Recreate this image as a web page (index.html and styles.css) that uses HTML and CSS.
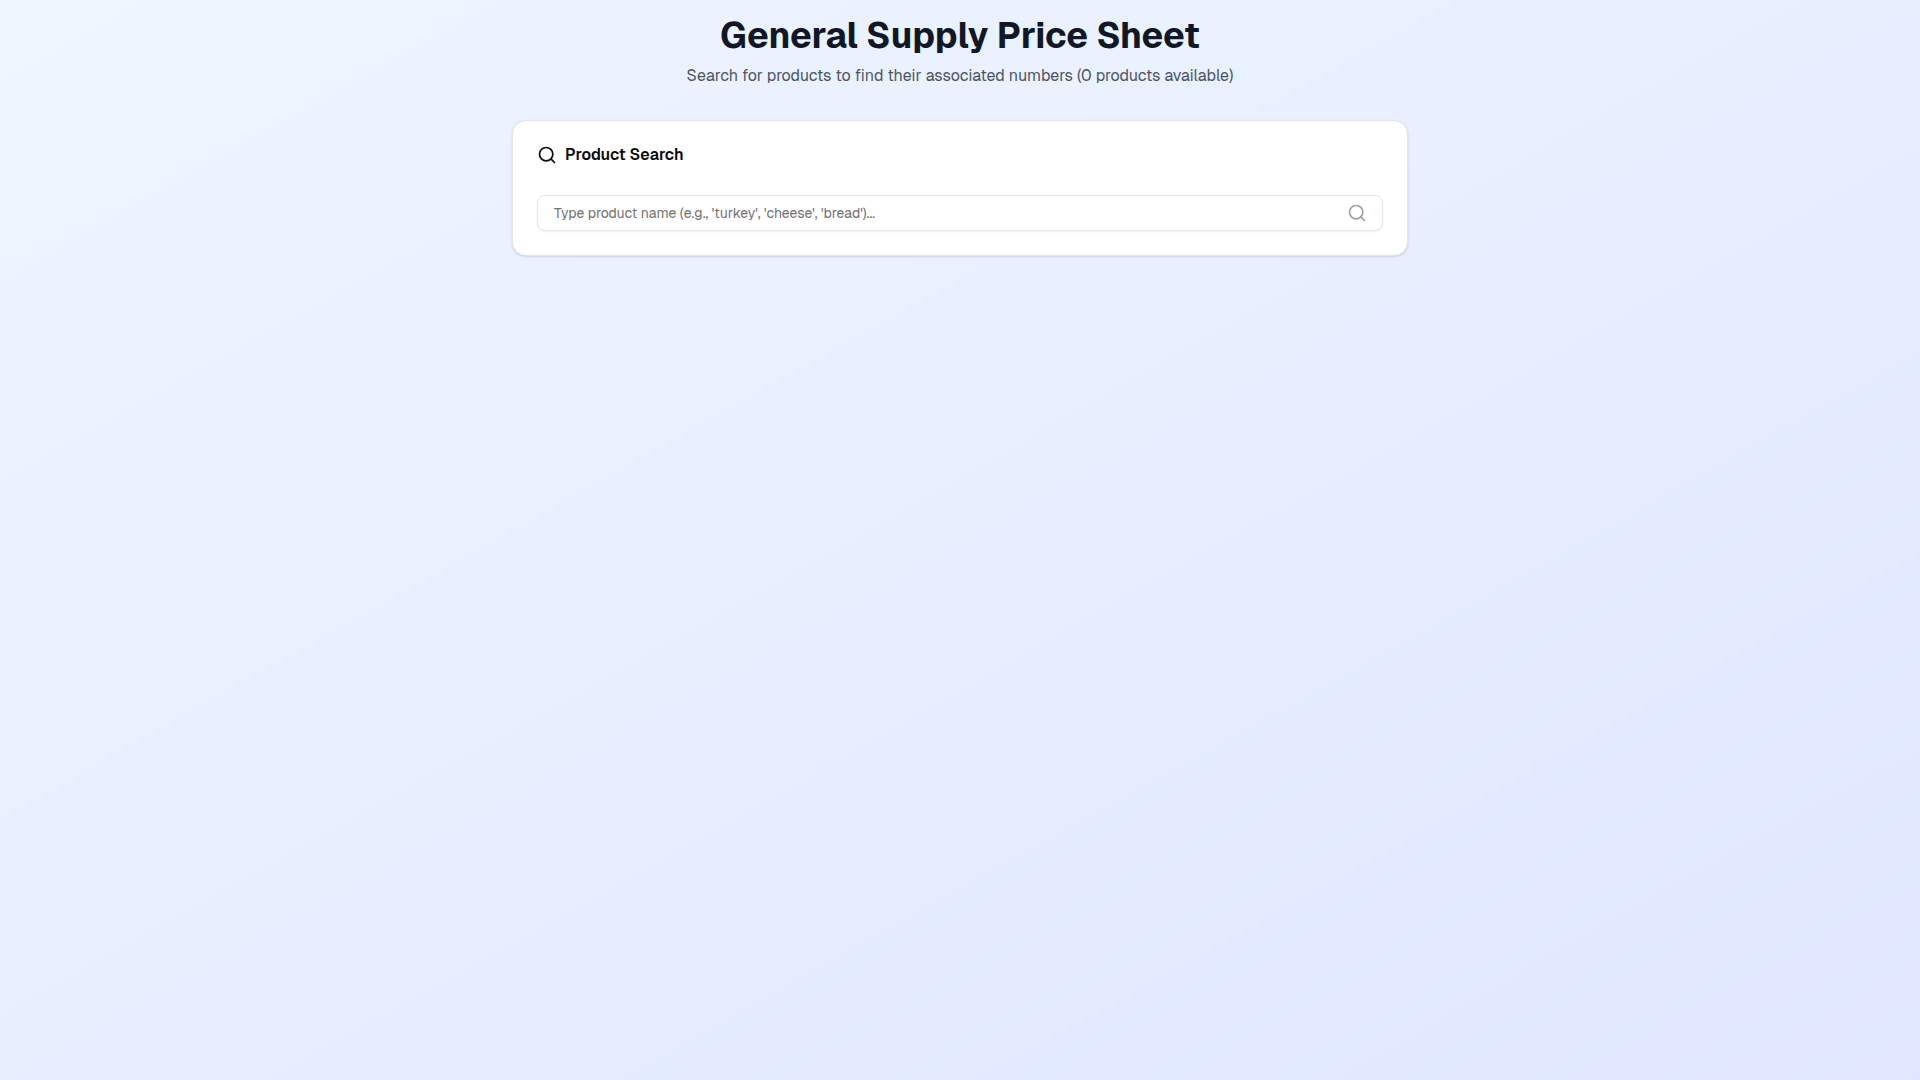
FILE: index.html
```html
<!DOCTYPE html>
<html lang="en">
<head>
<meta charset="utf-8">
<meta name="viewport" content="width=device-width, initial-scale=1">
<title>General Supply Price Sheet</title>
<link rel="stylesheet" href="styles.css">
</head>
<body>
<main class="page">
  <header class="header">
    <h1 class="title">General Supply Price Sheet</h1>
    <p class="subtitle">Search for products to find their associated numbers (0 products available)</p>
  </header>
  <section class="card">
    <h2 class="card-title">
      <svg class="icon" viewBox="0 0 24 24" aria-hidden="true"><path d="m21 21-4.34-4.34"/><circle cx="11" cy="11" r="8"/></svg>
      <label for="search">Product Search</label>
    </h2>
    <div class="field">
      <input class="input" id="search" type="text" placeholder="Type product name (e.g., 'turkey', 'cheese', 'bread')...">
      <svg class="icon field-icon" viewBox="0 0 24 24" aria-hidden="true"><path d="m21 21-4.34-4.34"/><circle cx="11" cy="11" r="8"/></svg>
    </div>
  </section>
</main>
</body>
</html>
```
FILE: styles.css
```css
*, *::before, *::after { box-sizing: border-box; }

body {
  margin: 0;
  min-height: 100vh;
  background: linear-gradient(to bottom right in oklab, oklch(97% 0.014 254.604), oklch(93% 0.034 272.788));
  color: #0a0a0a;
  font-family: Geist, Inter, "Liberation Sans", sans-serif;
  font-size: 16px;
  line-height: 24px;
  text-rendering: optimizeLegibility;
}

.page {
  max-width: 928px;
  margin: 0 auto;
  padding: 16px;
}

.header {
  margin-bottom: 32px;
  text-align: center;
}

.title {
  margin: 0 0 8px;
  color: #101828;
  font-size: 36px;
  font-weight: 700;
  line-height: 40px;
}

.subtitle {
  margin: 0;
  color: #4a5565;
}

.card {
  display: flex;
  flex-direction: column;
  gap: 30px;
  padding: 24px;
  border: 1px solid #e5e5e5;
  border-radius: 14px;
  background: #fff;
  box-shadow: 0 1px 3px rgb(0 0 0 / 10%), 0 1px 2px -1px rgb(0 0 0 / 10%);
}

.card-title {
  display: flex;
  align-items: center;
  gap: 8px;
  margin: 0;
  font-size: 16px;
  font-weight: 600;
  line-height: 16px;
}

.icon {
  width: 20px;
  height: 20px;
  fill: none;
  stroke: currentColor;
  stroke-width: 2;
  stroke-linecap: round;
  stroke-linejoin: round;
}

.field {
  position: relative;
}

.input {
  display: block;
  width: 100%;
  height: 36px;
  padding: 4px 48px 4px 16px;
  border: 1px solid #e5e5e5;
  border-radius: 8px;
  background: transparent;
  color: inherit;
  font-family: inherit;
  font-size: 14px;
  text-rendering: inherit;
  box-shadow: 0 1px 2px rgb(0 0 0 / 5%);
}

.input::placeholder {
  color: #737373;
}

.field-icon {
  position: absolute;
  top: 8px;
  right: 16px;
  color: #99a1af;
  pointer-events: none;
}
```
